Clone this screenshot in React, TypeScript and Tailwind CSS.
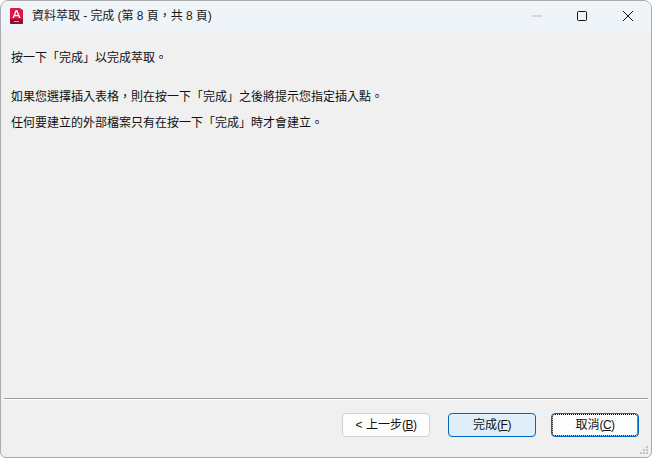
const FONT = "font-['Liberation_Sans','Noto_Sans_CJK_TC',sans-serif]";

function WizardButton({ label, hotkey, className }: { label: string; hotkey: string; className: string }) {
  return (
    <button className={`flex h-6 w-[88px] items-center justify-center rounded-[4px] border text-[12px] text-[#111] ${className}`}>
      {label}
      <span className="tracking-[-0.5px]">
        (<span className="underline">{hotkey}</span>)
      </span>
    </button>
  );
}

export default function App() {
  return (
    <div className={`flex h-[458px] w-[652px] flex-col overflow-hidden rounded-t-[8px] rounded-b-[6px] border border-[#ababab] bg-[#f0f0f0] ${FONT}`}>
      {/* title bar */}
      <div className="flex h-[30px] shrink-0 items-center bg-[#eff4f9]">
        <svg className="ml-[9px] h-[16px] w-[13px] shrink-0" viewBox="0 0 13 16">
          <path d="M1 0h8.500L13 2v13a1 1 0 0 1-1 1H1a1 1 0 0 1-1-1V1a1 1 0 0 1 1-1z" fill="#d9174a" />
          <path d="M0 11h13v4a1 1 0 0 1-1 1H1a1 1 0 0 1-1-1z" fill="#8c1030" />
          <path d="M2.500 10L5.700 2h1.600l3.200 8H9l-.7-1.800H4.700L4 10zM5.200 6.900h2.600L6.500 3.500z" fill="#fff" />
          <path d="M4 13.500h5" stroke="#d8a0ae" strokeWidth="1" />
        </svg>
        <span className="ml-[9px] text-[12px] tracking-[-0.04px] text-[#1a1a1a]">資料萃取 - 完成 (第 8 頁，共 8 頁)</span>
        <div className="ml-auto flex items-center">
          <svg className="mr-[35px] h-[10px] w-[10px]" viewBox="0 0 10 10">
            <path d="M0 5h10" stroke="#b9bcc0" strokeWidth="1" />
          </svg>
          <svg className="mr-[36px] h-[10px] w-[10px]" viewBox="0 0 10 10">
            <rect x="0.5" y="0.5" width="9" height="9" rx="1" fill="none" stroke="#111" strokeWidth="1" />
          </svg>
          <svg className="mr-[18px] h-[10px] w-[10px]" viewBox="0 0 10 10">
            <path d="M0 0l10 10M10 0L0 10" stroke="#111" strokeWidth="1" />
          </svg>
        </div>
      </div>

      {/* body */}
      <div className="flex flex-1 flex-col pl-[10px] pt-[19px] text-[12px] leading-[16px] text-[#111]">
        <p>按一下「完成」以完成萃取。</p>
        <p className="mt-[23px]">如果您選擇插入表格，則在按一下「完成」之後將提示您指定插入點。</p>
        <p className="mt-[10px]">任何要建立的外部檔案只有在按一下「完成」時才會建立。</p>
      </div>

      {/* footer */}
      <div className="relative shrink-0">
        <div className="mx-[3px] h-[2px] border-t border-b border-t-[#a0a0a0] border-b-white" />
        <div className="flex h-[57px] items-start justify-end pr-[12px] pt-[13px]">
          <WizardButton label="< 上一步" hotkey="B" className="border-[#d0d0d0] bg-[#fdfdfd]" />
          <WizardButton label="完成" hotkey="F" className="ml-[18px] border-[#0067c0] bg-[#e0eef9]" />
          <WizardButton label="取消" hotkey="C" className="ml-[15px] border-[#0067c0] bg-[#fdfdfd] outline-1 -outline-offset-2 outline-dotted outline-black" />
        </div>
        <svg className="absolute bottom-[2px] right-[2px] h-[10px] w-[10px]" viewBox="0 0 10 10">
          <g fill="#c4c4c4">
            <rect x="7" y="1" width="2" height="2" />
            <rect x="4" y="4" width="2" height="2" />
            <rect x="7" y="4" width="2" height="2" />
            <rect x="1" y="7" width="2" height="2" />
            <rect x="4" y="7" width="2" height="2" />
            <rect x="7" y="7" width="2" height="2" />
          </g>
        </svg>
      </div>
    </div>
  );
}
